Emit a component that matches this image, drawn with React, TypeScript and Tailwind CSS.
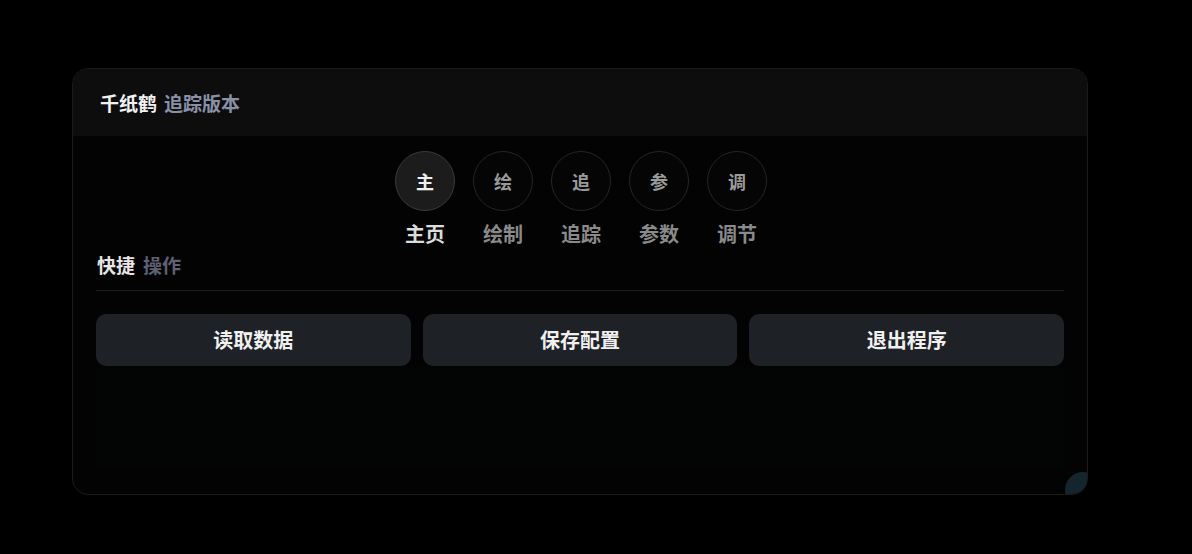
import React from "react";

const tabs = [
  { icon: "主", label: "主页", active: true },
  { icon: "绘", label: "绘制" },
  { icon: "追", label: "追踪" },
  { icon: "参", label: "参数" },
  { icon: "调", label: "调节" },
];

const actions = ["读取数据", "保存配置", "退出程序"];

const font = { fontFamily: '"Noto Sans CJK SC", "Noto Sans", sans-serif' };

export default function App() {
  return (
    <div className="min-h-[554px] w-full bg-black pl-[72px] pt-[68px]" style={font}>
      <div className="relative flex h-[427px] w-[1016px] flex-col overflow-hidden rounded-[16px] border border-[#1b1b1b] bg-[#030303]">
        {/* header */}
        <div className="flex h-[67px] items-center bg-[#0d0d0d] pl-[27px] pt-[2px]">
          <span className="text-[19px] font-bold text-[#f2f2f2]">千纸鹤</span>
          <span className="ml-[7px] text-[19px] font-bold text-[#8a90a8]">追踪版本</span>
        </div>

        <div className="flex flex-1 flex-col px-[23px] pt-[15px]">
          {/* nav */}
          <div className="flex justify-center gap-[18px] pl-[2px]">
            {tabs.map((t) => (
              <div key={t.label} className="flex w-[60px] flex-col items-center">
                <div
                  className={
                    t.active
                      ? "flex h-[60px] w-[60px] items-center justify-center rounded-full border border-[#3a3a3a] bg-[#1c1c1c] text-[18px] font-bold text-[#f0f0f0]"
                      : "flex h-[60px] w-[60px] items-center justify-center rounded-full border border-[#262626] bg-[#050505] text-[18px] font-bold text-[#9a9a9a]"
                  }
                >
                  {t.icon}
                </div>
                <div
                  className={
                    t.active
                      ? "mt-[9px] text-[20px] font-bold leading-[28px] text-[#dcdcdc]"
                      : "mt-[9px] text-[20px] font-bold leading-[28px] text-[#8a8a8a]"
                  }
                >
                  {t.label}
                </div>
              </div>
            ))}
          </div>

          {/* quick actions */}
          <div className="mt-[4px] flex items-center border-b border-[#1e1e1e] pb-[12px] pl-[1px]">
            <span className="text-[19px] font-bold leading-[26px] text-[#e6e6e6]">快捷</span>
            <span className="ml-[8px] text-[19px] font-bold leading-[26px] text-[#5e6174]">操作</span>
          </div>

          <div className="mt-[23px] grid grid-cols-3 gap-[12px]">
            {actions.map((a) => (
              <button
                key={a}
                className="flex h-[52px] items-center justify-center rounded-[10px] bg-[#1e2126] text-[20px] font-bold text-[#f0f0f0]"
              >
                {a}
              </button>
            ))}
          </div>

          <div className="h-[104px] rounded-b-[8px] bg-[#020504]" />
        </div>

        <div className="absolute -bottom-[14px] -right-[14px] h-[36px] w-[36px] rounded-full bg-[#1c3440] opacity-70" />
      </div>
    </div>
  );
}
